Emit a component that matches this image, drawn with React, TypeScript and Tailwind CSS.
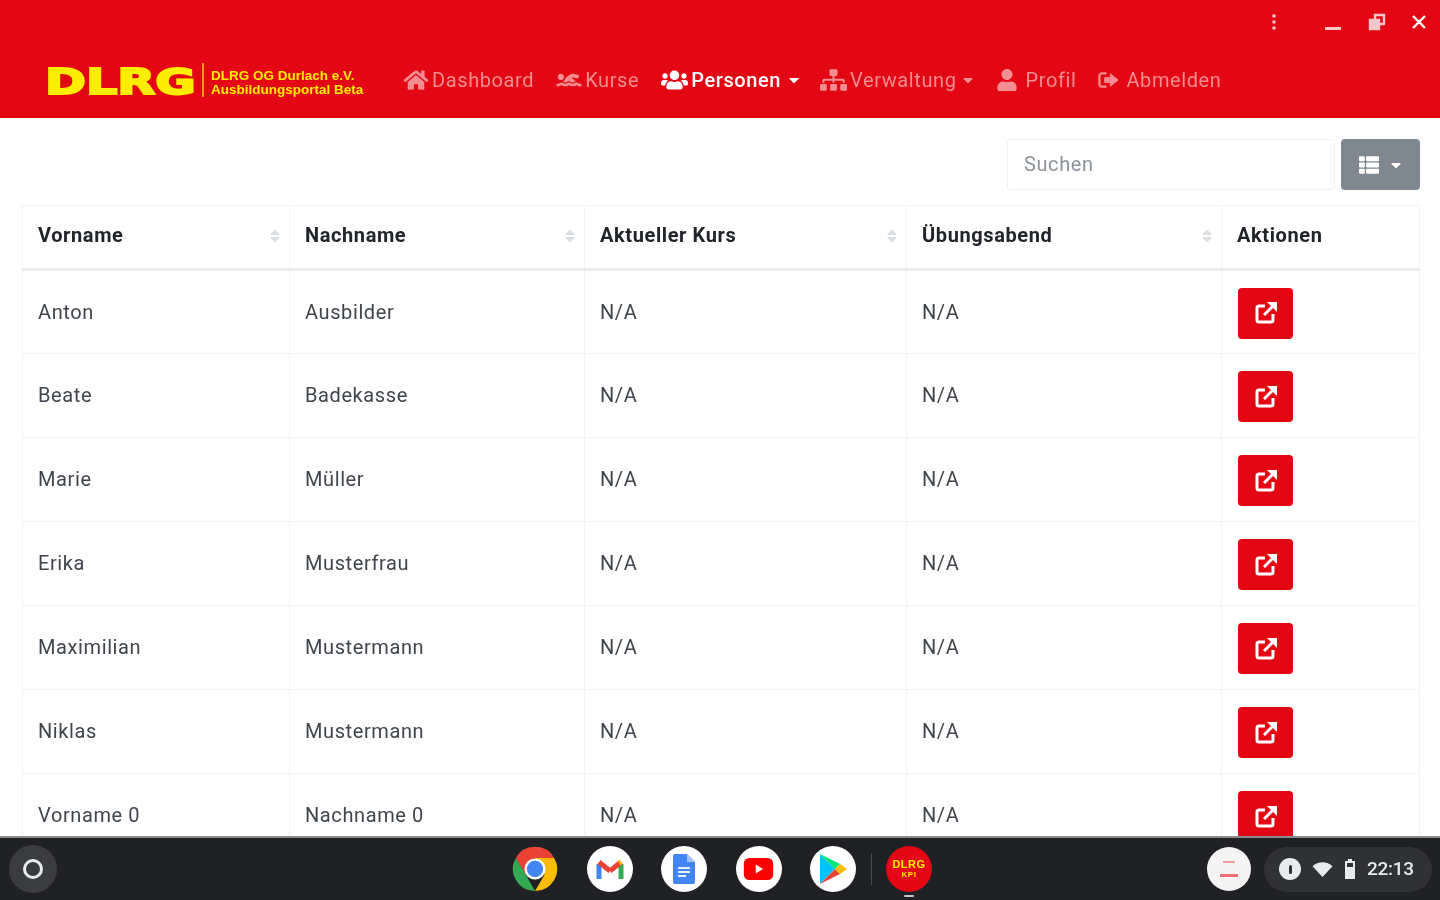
import { FaCaretDown, FaHome, FaSitemap, FaSort, FaSwimmer, FaThList, FaUser, FaUsers } from "react-icons/fa";
import type { ReactNode } from "react";

const people = [
  ["Anton", "Ausbilder"],
  ["Beate", "Badekasse"],
  ["Marie", "Müller"],
  ["Erika", "Musterfrau"],
  ["Maximilian", "Mustermann"],
  ["Niklas", "Mustermann"],
  ["Vorname 0", "Nachname 0"],
];

const columns = [
  { label: "Vorname", width: "w-[267px]" },
  { label: "Nachname", width: "w-[295px]" },
  { label: "Aktueller Kurs", width: "w-[322px]" },
  { label: "Übungsabend", width: "w-[315px]" },
];

const SignOutIcon = () => (
  <svg viewBox="0 0 22 18" className="h-[18px] w-[21px]" fill="none" stroke="currentColor">
    <path d="M8 2H4a2.5 2.5 0 0 0-2.5 2.5v9A2.5 2.5 0 0 0 4 16h4" strokeWidth="2.4" strokeLinecap="round" />
    <path d="M7 6.5h6V2.5L21 9l-8 6.5v-4H7z" fill="currentColor" strokeWidth="1" strokeLinejoin="round" />
  </svg>
);

const EditIcon = () => (
  <svg viewBox="0 0 24 24" className="h-6 w-6" fill="none" stroke="white" strokeWidth="3">
    <path d="M11 5H5a2 2 0 0 0-2 2v12a2 2 0 0 0 2 2h12a2 2 0 0 0 2-2v-6" />
    <path d="M10 14L19 5" />
    <path d="M13 1h10v10z" fill="white" stroke="none" />
  </svg>
);

const NavItem = ({ icon, label, active, caret, className = "" }: { icon: ReactNode; label: string; active?: boolean; caret?: string; className?: string }) => (
  <div className={`flex items-center gap-[3px] ${active ? "font-medium text-white" : "text-[#f38d92]"} ${className}`}>
    {icon}
    <span>{label}</span>
    {caret && <FaCaretDown className={`${caret} h-[16px] w-[14px]`} />}
  </div>
);

const AppCircle = ({ children }: { children: ReactNode }) => (
  <div className="flex h-[46px] w-[46px] items-center justify-center rounded-full bg-white">{children}</div>
);

const Shelf = () => (
  <footer className="flex h-[64px] shrink-0 items-center border-t-2 border-[#8a8b8d] bg-[#202124]">
    <div className="ml-[9px] flex h-12 w-12 items-center justify-center rounded-full bg-[#3b3c3f]">
      <div className="h-[20px] w-[20px] rounded-full border-[3px] border-[#e8eaed]" />
    </div>
    <div className="ml-[455px] flex items-center gap-[28.5px]">
      <svg viewBox="0 0 48 48" className="h-[46px] w-[46px]">
        <path d="M24 24L24 1a23 23 0 0 1 20 11.5z" fill="#ea4335" />
        <path d="M4 12.5A23 23 0 0 1 44 12.5L24 12.5 14 30z" fill="#ea4335" />
        <path d="M4 12.5L15 31l9 16A23 23 0 0 1 4 12.5z" fill="#34a853" />
        <path d="M44 12.5A23 23 0 0 1 24 47l10-17-10-17.5z" fill="#fbbc04" />
        <circle cx="24" cy="24" r="11" fill="white" />
        <circle cx="24" cy="24" r="8.5" fill="#4285f4" />
      </svg>
      <AppCircle>
        <svg viewBox="0 0 30 24" className="h-[24px] w-[30px]" fill="none" strokeWidth="5">
          <path d="M4 22V7" stroke="#4285f4" />
          <path d="M26 22V7" stroke="#34a853" />
          <path d="M4 5l11 9" stroke="#ea4335" />
          <path d="M15 14l11-9" stroke="#ea4335" />
          <path d="M24 6l2-1" stroke="#fbbc04" />
        </svg>
      </AppCircle>
      <AppCircle>
        <svg viewBox="0 0 22 30" className="h-[30px] w-[22px]">
          <path d="M2 0h12l8 8v20a2 2 0 0 1-2 2H2a2 2 0 0 1-2-2V2a2 2 0 0 1 2-2z" fill="#4285f4" />
          <path d="M14 0l8 8h-8z" fill="#a1c2fa" />
          <path d="M5 13h12v2H5zM5 17h12v2H5zM5 21h8v2H5z" fill="#e8f0fe" />
        </svg>
      </AppCircle>
      <AppCircle>
        <svg viewBox="0 0 32 24" className="h-[22px] w-[31px]">
          <rect width="32" height="24" rx="6" fill="#f00" />
          <path d="M13 7l8 5-8 5z" fill="white" />
        </svg>
      </AppCircle>
      <AppCircle>
        <svg viewBox="0 0 28 32" className="h-[32px] w-[28px]">
          <path d="M1 1v30l15-15z" fill="#00c3ff" />
          <path d="M1 1l15 15 5-5z" fill="#00e676" />
          <path d="M1 31l15-15 5 5z" fill="#ea4335" />
          <path d="M21 11l7 5-7 5-5-5z" fill="#fbbc04" />
        </svg>
      </AppCircle>
      <div className="-ml-[14px] h-[32px] w-px bg-[#4a4b4e]" />
      <div className="relative -ml-[14px] flex h-[46px] w-[46px] flex-col items-center justify-center rounded-full bg-[#e30613] font-['Liberation_Sans',sans-serif] text-[11px] leading-[11px] font-bold text-[#ffed00]">
        <span className="tracking-[0.5px]">DLRG</span>
        <span className="text-[8px] leading-[9px]">KPI</span>
        <div className="absolute -bottom-[5px] h-[2px] w-[10px] rounded-full bg-[#c8c9cb]" />
      </div>
    </div>
    <div className="ml-auto flex items-center gap-[13px] pr-2">
      <div className="flex h-[44px] w-[44px] flex-col items-center justify-center gap-[11px] rounded-full bg-[#f4f4f4]">
        <div className="h-[2px] w-[12px] bg-[#f2a0a4]" />
        <div className="h-[3px] w-[18px] bg-[#ef6f76]" />
      </div>
      <div className="flex h-[45px] w-[168px] items-center rounded-full bg-[#303134] pl-[15px] text-[#e8eaed]">
        <div className="flex h-[22px] w-[22px] items-center justify-center rounded-full bg-[#e8eaed]">
          <div className="h-[9px] w-[3px] rounded-sm bg-[#303134]" />
        </div>
        <svg viewBox="0 0 24 18" className="ml-[11px] h-[15px] w-[21px]" fill="#e8eaed">
          <path d="M12 18L0 5a18 18 0 0 1 24 0z" />
        </svg>
        <svg viewBox="0 0 12 20" className="ml-[11px] h-[20px] w-[12px]" fill="none" stroke="#e8eaed" strokeWidth="2">
          <path d="M4 1h4M2 3h8v16H2z" />
          <path d="M3 8h6v10H3z" fill="#e8eaed" stroke="none" />
        </svg>
        <span className="ml-[11px] text-[19px] font-medium tracking-[-0.3px]">22:13</span>
      </div>
    </div>
  </footer>
);

export default function App() {
  return (
    <div className="flex h-[900px] w-[1440px] flex-col overflow-hidden bg-white font-['Roboto',sans-serif] text-[20px] tracking-[0.6px] text-[#212529] blur-[0.6px]">
      <header className="h-[118px] shrink-0 bg-[#e30613]">
        <div className="flex h-[44px] items-center justify-end pr-[14px] text-white">
          <svg viewBox="0 0 4 16" className="mr-[49px] h-[16px] w-[4px]" fill="#f6c6c9">
            <circle cx="2" cy="2" r="1.8" />
            <circle cx="2" cy="8" r="1.8" />
            <circle cx="2" cy="14" r="1.8" />
          </svg>
          <div className="mr-[27px] mt-[13px] h-[3px] w-[16px] bg-[#f6c6c9]" />
          <svg viewBox="0 0 18 18" className="mr-[26px] h-[18px] w-[18px]" fill="none" stroke="#f6c6c9" strokeWidth="2.4">
            <path d="M7 2h9v9H7z" />
            <path d="M2 7h9v9H2z" fill="#f6c6c9" />
          </svg>
          <svg viewBox="0 0 14 14" className="h-[14px] w-[14px]" stroke="white" strokeWidth="2.4">
            <path d="M1 1l12 12M13 1L1 13" />
          </svg>
        </div>
        <nav className="flex h-[72px] items-center pl-[45px]">
          <div className="mt-[4px] flex h-[36px] w-[157px] items-center font-['DejaVu_Sans',sans-serif] text-[36px] font-bold tracking-normal text-[#ffed00]">
            <span className="origin-left scale-x-[1.37] [-webkit-text-stroke:2px_#ffed00]">DLRG</span>
          </div>
          <div className="h-[34px] w-[2px] bg-[#ff9a14]" />
          <div className="mt-[5px] ml-[7px] w-[160px] font-['Liberation_Sans',sans-serif] text-[13.5px] leading-[14px] font-bold tracking-normal whitespace-nowrap text-[#ffed00]">
            <div>DLRG OG Durlach e.V.</div>
            <div>Ausbildungsportal Beta</div>
          </div>
          <div className="ml-[32px] flex items-center gap-[22px]">
            <NavItem icon={<FaHome className="h-[22px] w-[26px]" />} label="Dashboard" />
            <NavItem icon={<FaSwimmer className="h-[20px] w-[26px]" />} label="Kurse" />
            <NavItem active caret="ml-[3px]" icon={<FaUsers className="h-[22px] w-[27px]" />} label="Personen" />
            <NavItem className="-ml-[3px]" caret="ml-[1px]" icon={<FaSitemap className="h-[22px] w-[27px]" />} label="Verwaltung" />
            <NavItem className="-ml-[1px]" icon={<FaUser className="mr-[5px] h-[22px] w-[22px]" />} label="Profil" />
            <NavItem icon={<span className="mr-1"><SignOutIcon /></span>} label="Abmelden" />
          </div>
        </nav>
      </header>

      <main className="min-h-0 flex-1 overflow-hidden px-[20px] pt-[21px]">
        <div className="flex justify-end gap-[6px]">
          <div className="flex h-[51px] w-[328px] items-center rounded border border-[#eef0f2] px-[16px] pb-[2px] text-[#8b9299]">Suchen</div>
          <div className="flex h-[51px] w-[79px] items-center justify-center gap-[9px] rounded bg-[#7f8890] text-white">
            <FaThList className="h-[20px] w-[22px]" />
            <FaCaretDown className="h-[16px] w-[14px]" />
          </div>
        </div>
        <table className="mt-[15px] ml-[2px] w-[1398px] table-fixed border-collapse border border-[#f1f3f4]">
          <thead>
            <tr className="h-[64px] border-b-[3px] border-[#e9ecef] font-bold">
              {columns.map((col) => (
                <th key={col.label} className={`${col.width} relative border-r border-[#f1f3f4] pb-[4px] pl-[15px] text-left font-bold`}>
                  {col.label}
                  <FaSort className="absolute top-[21px] right-[9px] h-[18px] w-[10px] text-[#dcdfe2]" />
                </th>
              ))}
              <th className="pb-[4px] pl-[15px] text-left font-bold">Aktionen</th>
            </tr>
          </thead>
          <tbody>
            {people.map(([first, last], i) => (
              <tr key={i} className="h-[84px] border-b border-[#f1f3f4] text-[#3f454b]">
                <td className="border-r border-[#f1f3f4] pb-[1px] pl-[15px]">{first}</td>
                <td className="border-r border-[#f1f3f4] pb-[1px] pl-[15px]">{last}</td>
                <td className="border-r border-[#f1f3f4] pb-[1px] pl-[15px]">N/A</td>
                <td className="border-r border-[#f1f3f4] pb-[1px] pl-[15px]">N/A</td>
                <td className="pt-[2px] pl-[16px]">
                  <div className="flex h-[51px] w-[55px] items-center justify-center rounded bg-[#e30613]">
                    <EditIcon />
                  </div>
                </td>
              </tr>
            ))}
          </tbody>
        </table>
      </main>
      <Shelf />
    </div>
  );
}
